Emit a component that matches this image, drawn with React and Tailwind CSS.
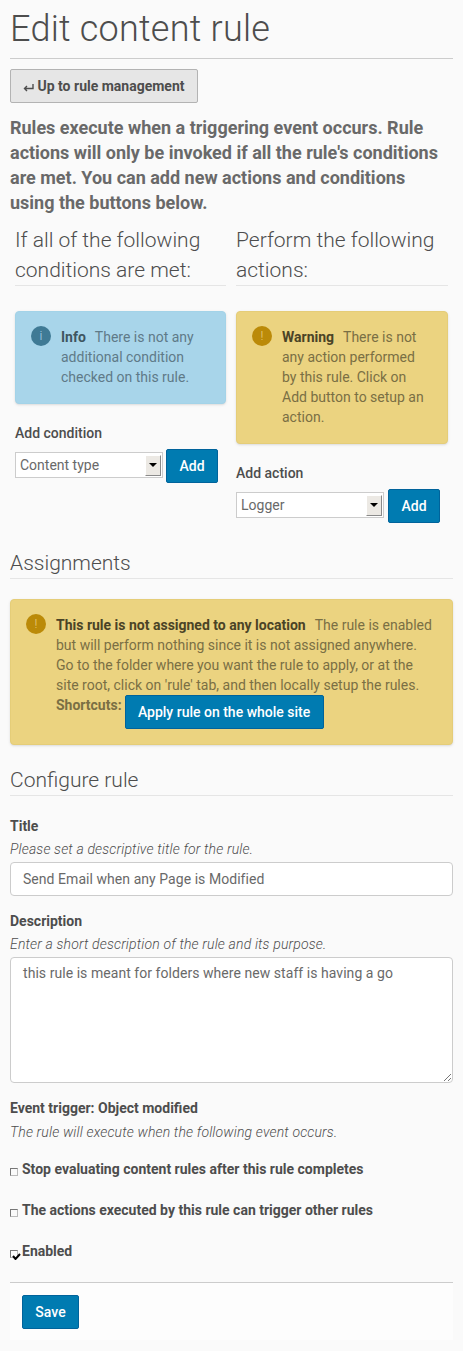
const font = { fontFamily: 'Roboto, sans-serif' }

function SelectBox({ label }) {
  return (
    <div className="flex h-[26px] w-[148px] items-center justify-between border border-[#ccc] bg-white pl-[4px] pr-[1px] text-sm text-[#696969]">
      <span>{label}</span>
      <span className="flex h-[21px] w-[16px] items-center justify-center border border-t-white border-l-white border-r-[#8a8a8a] border-b-[#8a8a8a] bg-[#ece9e4]">
        <span className="h-0 w-0 border-x-[4px] border-t-[4px] border-x-transparent border-t-black" />
      </span>
    </div>
  )
}

function BlueButton({ children, className = '' }) {
  return (
    <button className={`h-[34px] rounded-[2px] border border-[#00639b] bg-[#007bb1] text-sm font-medium text-white ${className}`}>
      {children}
    </button>
  )
}

function Badge({ className, mark }) {
  return (
    <span className={`absolute flex h-[20px] w-[20px] items-center justify-center rounded-full text-[13px] font-light ${className}`}>
      {mark}
    </span>
  )
}

function Check({ label, checked }) {
  return (
    <div className="flex h-[20px] items-center text-sm font-bold text-[#4d4d4d]">
      <span className="relative mr-[4px] mt-[6px] h-[8px] w-[8px] shrink-0 border border-t-[#777] border-l-[#777] border-r-[#bbb] border-b-[#bbb] bg-[#fafafa]">
        {checked && (
          <svg className="absolute left-[1px] top-[2px]" width="9" height="7" viewBox="0 0 9 7">
            <path d="M1 3 L3.5 6 L8 1" fill="none" stroke="#000" strokeWidth="2" />
          </svg>
        )}
      </span>
      {label}
    </div>
  )
}

export default function App() {
  return (
    <div style={font} className="min-h-[1351px] bg-[#fafafa] px-[10px] text-sm leading-5 text-[#4d4d4d]">
      <h1 className="h-[59px] border-b border-[#ccc] pt-[9px] text-4xl leading-[40px] font-light tracking-[0.24px]">Edit content rule</h1>

      <button className="mt-[10px] flex h-[34px] w-[188px] items-center justify-center rounded-[2px] border border-[#b3b3b3] bg-[#e6e6e6] text-sm font-bold text-[#4d4d4d]">
        <svg className="mr-[3px] mt-[5px]" width="11" height="9" viewBox="0 0 11 9">
          <path d="M10 0 V4.5 H2 M4 2 L1.5 4.5 L4 7" fill="none" stroke="#4d4d4d" strokeWidth="1.4" />
        </svg>
        Up to rule management
      </button>

      <p className="mt-[12px] text-lg leading-[25px] font-bold text-[#696969]">
        Rules execute when a triggering event occurs. Rule actions will only be invoked if all the rule's conditions are met. You can add new actions and conditions using the buttons below.
      </p>

      <div className="mt-[10px] flex gap-[10px] pl-[5px] pr-[5px]">
        <div className="w-[211px]">
          <h3 className="h-[61px] border-b border-[#e5e5e5] text-[21px] leading-[30px] font-light">If all of the following conditions are met:</h3>
          <div className="relative mt-[25px] h-[93px] rounded-[4px] border border-[#a3d3e8] bg-[#a8d5ea] pl-[45px] pr-[20px] pt-[15px] text-[#5f7a88] shadow-sm">
            <Badge className="left-[15px] top-[14px] bg-[#3f7a95] text-[#a8d5ea]" mark="i" />
            <b className="mr-[9px] font-bold text-[#3f5561]">Info</b>There is not any additional condition checked on this rule.
          </div>
          <div className="mt-[19px] font-medium">Add condition</div>
          <div className="mt-[6px] flex items-start gap-[3px]">
            <div className="pt-[3px]"><SelectBox label="Content type" /></div>
            <BlueButton className="w-[52px]">Add</BlueButton>
          </div>
        </div>
        <div className="w-[212px]">
          <h3 className="h-[61px] border-b border-[#e5e5e5] text-[21px] leading-[30px] font-light">Perform the following actions:</h3>
          <div className="relative mt-[25px] h-[133px] rounded-[4px] border border-[#e5cd78] bg-[#ebd380] pl-[45px] pr-[20px] pt-[15px] text-[#7a6f44] shadow-sm">
            <Badge className="left-[15px] top-[14px] bg-[#bb8a08] text-[#ebd380]" mark="!" />
            <b className="mr-[9px] font-bold text-[#4a4326]">Warning</b>There is not any action performed by this rule. Click on Add button to setup an action.
          </div>
          <div className="mt-[19px] font-medium">Add action</div>
          <div className="mt-[6px] flex items-start gap-[4px]">
            <div className="pt-[3px]"><SelectBox label="Logger" /></div>
            <BlueButton className="w-[52px]">Add</BlueButton>
          </div>
        </div>
      </div>

      <h2 className="mt-[19px] h-[37px] border-b border-[#e5e5e5] pt-[7px] text-[21px] leading-[28px] font-light">Assignments</h2>

      <div className="relative mt-[20px] h-[146px] rounded-[4px] border border-[#e5cd78] bg-[#ebd380] pl-[45px] pr-[10px] pt-[15px] text-[#7a6f44] shadow-sm">
        <Badge className="left-[15px] top-[14px] bg-[#bb8a08] text-[#ebd380]" mark="!" />
        <b className="mr-[9px] font-bold text-[#4a4326]">This rule is not assigned to any location</b>The rule is enabled<br />
        but will perform nothing since it is not assigned anywhere.<br />
        Go to the folder where you want the rule to apply, or at the<br />
        site root, click on 'rule' tab, and then locally setup the rules.
        <div className="flex items-start gap-[3px]">
          <b className="font-bold">Shortcuts:</b>
          <BlueButton className="w-[199px]">Apply rule on the whole site</BlueButton>
        </div>
      </div>

      <h2 className="mt-[21px] h-[30px] border-b border-[#e5e5e5] text-[21px] leading-[28px] font-light">Configure rule</h2>

      <div className="mt-[20px] font-bold">Title</div>
      <div className="mt-[3px] italic font-light tracking-[0.16px] text-[#4d4d4d]">Please set a descriptive title for the rule.</div>
      <div className="mt-[3px] flex h-[34px] items-center rounded-[4px] border border-[#ccc] bg-white px-[12px] tracking-[0.05px] text-[#696969]">Send Email when any Page is Modified</div>

      <div className="mt-[15px] font-bold">Description</div>
      <div className="mt-[3px] italic font-light tracking-[0.16px] text-[#4d4d4d]">Enter a short description of the rule and its purpose.</div>
      <div className="relative mt-[3px] h-[126px] rounded-[4px] border border-[#ccc] bg-white px-[12px] pt-[5px] tracking-[0.05px] text-[#696969]">
        this rule is meant for folders where new staff is having a go
        <svg className="absolute bottom-0 right-0" width="10" height="10" viewBox="0 0 10 10">
          <path d="M2 9 L9 2 M6 9 L9 6" stroke="#777" strokeWidth="1" />
        </svg>
      </div>

      <div className="mt-[15px] font-bold">Event trigger: Object modified</div>
      <div className="mt-[4px] italic font-light tracking-[0.16px] text-[#4d4d4d]">The rule will execute when the following event occurs.</div>

      <div className="mt-[17px] flex flex-col gap-[21px]">
        <Check label="Stop evaluating content rules after this rule completes" />
        <Check label="The actions executed by this rule can trigger other rules" />
        <Check label="Enabled" checked />
      </div>

      <div className="mt-[21px] h-[58px] border-t border-[#ccc] bg-[#fdfdfd] pl-[12px] pt-[12px]">
        <BlueButton className="w-[57px]">Save</BlueButton>
      </div>
    </div>
  )
}
